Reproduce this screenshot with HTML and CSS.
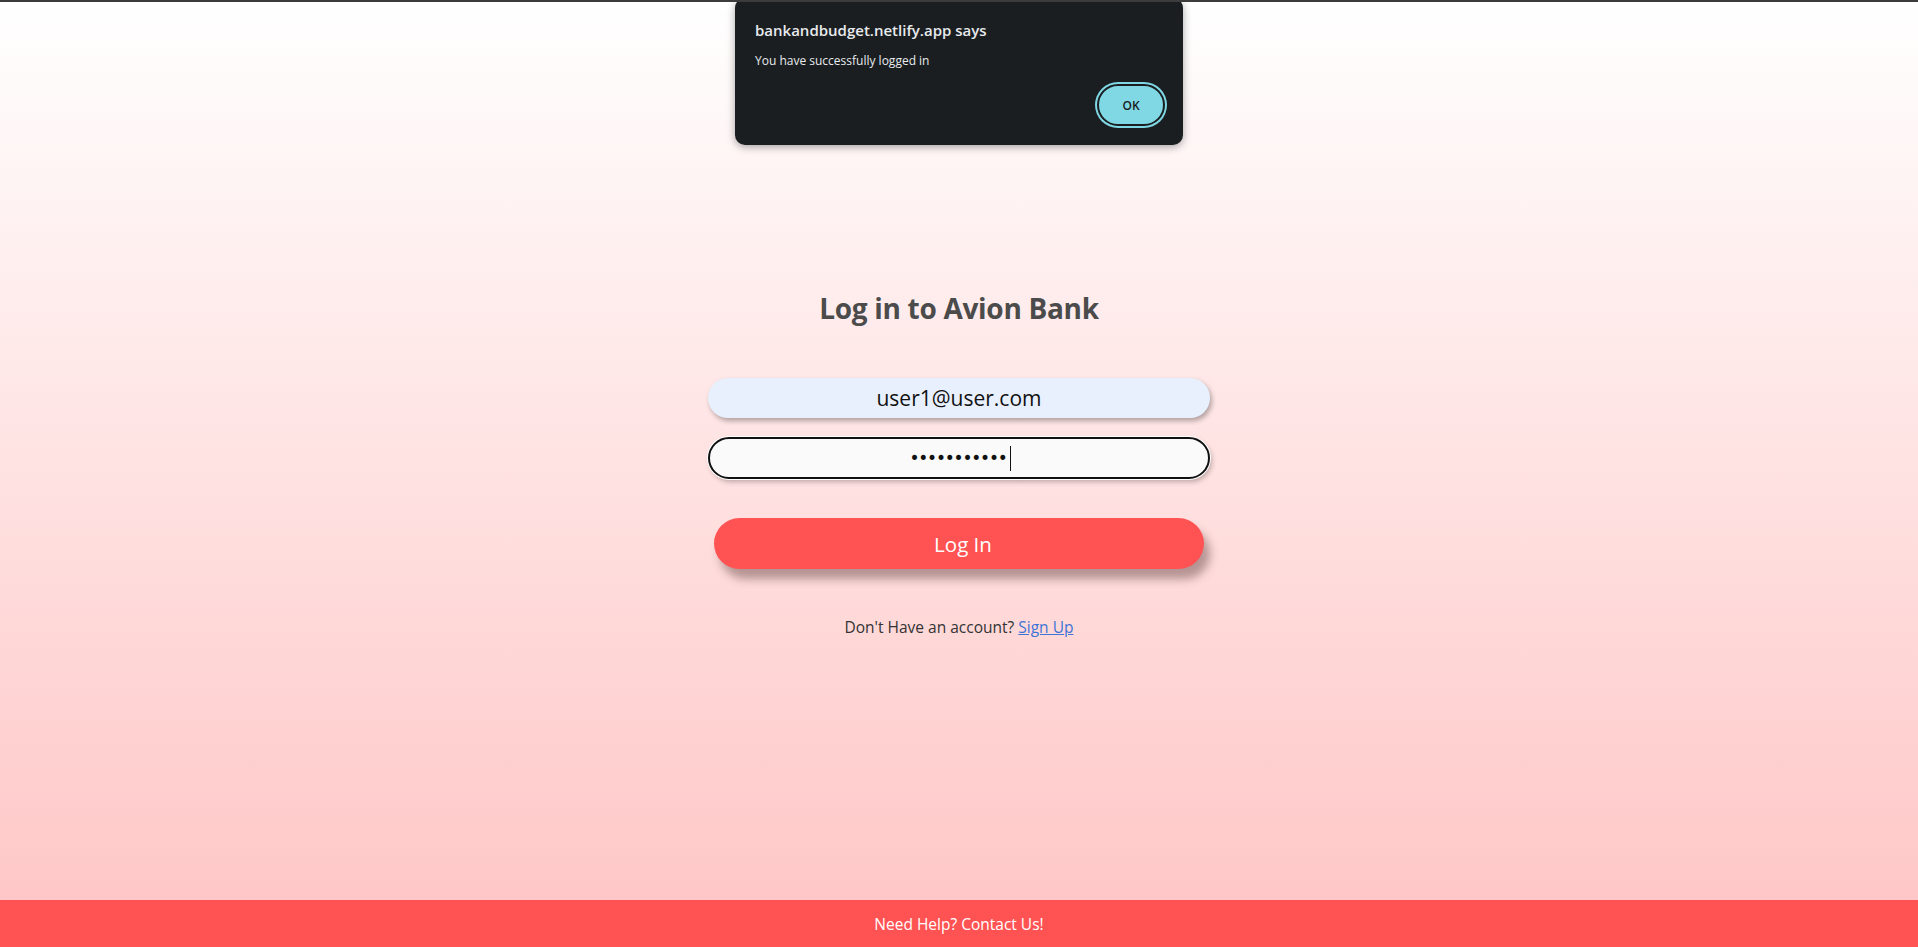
FILE: index.html
```html
<!DOCTYPE html>
<html lang="en">
<head>
<meta charset="utf-8">
<title>Avion Bank</title>
<link rel="stylesheet" href="styles.css">
</head>
<body>
<div class="page">
  <main class="main">
    <h1 class="title">Log in to Avion Bank</h1>
    <form class="login-form">
      <input class="field field-email" type="email" value="user1@user.com">
      <div class="field field-password"><span class="dots">•••••••••••</span><span class="caret"></span></div>
      <button type="button" class="login-btn">Log In</button>
    </form>
    <p class="signup">Don't Have an account? <a href="#" class="signup-link">Sign Up</a></p>
  </main>
  <footer class="footer">Need Help? Contact Us!</footer>
  <div class="dialog">
    <div class="dialog-title">bankandbudget.netlify.app says</div>
    <div class="dialog-msg">You have successfully logged in</div>
    <div class="dialog-actions"><button type="button" class="ok-btn">OK</button></div>
  </div>
</div>
</body>
</html>
```
FILE: styles.css
```css
* { box-sizing: border-box; }
html, body { margin: 0; padding: 0; }
body {
  font-family: "Open Sans", "Noto Sans", sans-serif;
  border-top: 2px solid #3c3c3c;
  height: 947px;
  overflow: hidden;
}
.page {
  position: relative;
  height: 945px;
  display: flex;
  flex-direction: column;
}
.main {
  flex: 1;
  background: linear-gradient(to bottom, #ffffff 0%, #ffc7c7 100%);
  display: flex;
  flex-direction: column;
  align-items: center;
  padding-top: 288px;
}
.title {
  margin: 0;
  font-size: 28px;
  line-height: 36px;
  font-weight: 700;
  color: #4b4b4b;
  letter-spacing: -0.3px;
}
.login-form {
  margin-top: 52px;
  width: 502px;
  display: flex;
  flex-direction: column;
  align-items: center;
}
.field {
  width: 502px;
  border-radius: 21px;
  text-align: center;
  font-family: "Open Sans", "Noto Sans", sans-serif;
  color: #111;
}
.field-email {
  height: 40px;
  border: none;
  background: #e8f0fe;
  font-size: 21px;
  box-shadow: 2px 3px 5px rgba(0,0,0,0.3);
  outline: none;
}
.field-password {
  margin-top: 19px;
  height: 42px;
  border: 2px solid #111;
  background: #fafafa;
  display: flex;
  align-items: center;
  justify-content: center;
  box-shadow: 0 0 0 1px #fff, 2px 3px 5px rgba(0,0,0,0.25);
}
.dots {
  font-family: "DejaVu Sans", sans-serif;
  font-size: 17px;
  letter-spacing: -1.2px;
  color: #111;
  padding-left: 2px;
}
.caret {
  display: inline-block;
  width: 1px;
  height: 25px;
  background: #111;
  margin-left: 3px;
}
.login-btn {
  margin-top: 39px;
  width: 490px;
  height: 51px;
  border: none;
  border-radius: 26px;
  background: #ff5353;
  color: #fff;
  font-family: "Open Sans", "Noto Sans", sans-serif;
  font-size: 20.5px;
  padding-left: 14px;
  box-shadow: 6px 10px 10px rgba(90,60,60,0.45);
}
.signup {
  margin: 47px 0 0;
  font-size: 15.5px;
  line-height: 22px;
  color: #333;
}
.signup-link {
  color: #3d74d6;
}
.footer {
  height: 47px;
  background: #ff5353;
  color: #fff;
  font-size: 15.5px;
  display: flex;
  align-items: center;
  justify-content: center;
}
.dialog {
  position: absolute;
  left: 735px;
  top: -4px;
  width: 448px;
  height: 147px;
  background: #1a1e21;
  border-radius: 10px;
  box-shadow: 0 2px 8px rgba(0,0,0,0.35);
  padding: 22px 16px 16px 20px;
  display: flex;
  flex-direction: column;
}
.dialog-title {
  font-size: 15px;
  font-weight: 600;
  color: #e8eaed;
  line-height: 20px;
}
.dialog-msg {
  margin-top: 12px;
  font-size: 12px;
  color: #e8eaed;
  line-height: 18px;
}
.dialog-actions {
  margin-top: auto;
  display: flex;
  justify-content: flex-end;
}
.ok-btn {
  width: 68px;
  height: 42px;
  border-radius: 21px;
  background: #7fd8e4;
  border: 2px solid #1a1e21;
  box-shadow: 0 0 0 2px #7fd8e4;
  font-family: "Open Sans", "Noto Sans", sans-serif;
  font-size: 12px;
  font-weight: 600;
  color: #1a1e21;
  margin: 2px 2px 3px;
}
```
